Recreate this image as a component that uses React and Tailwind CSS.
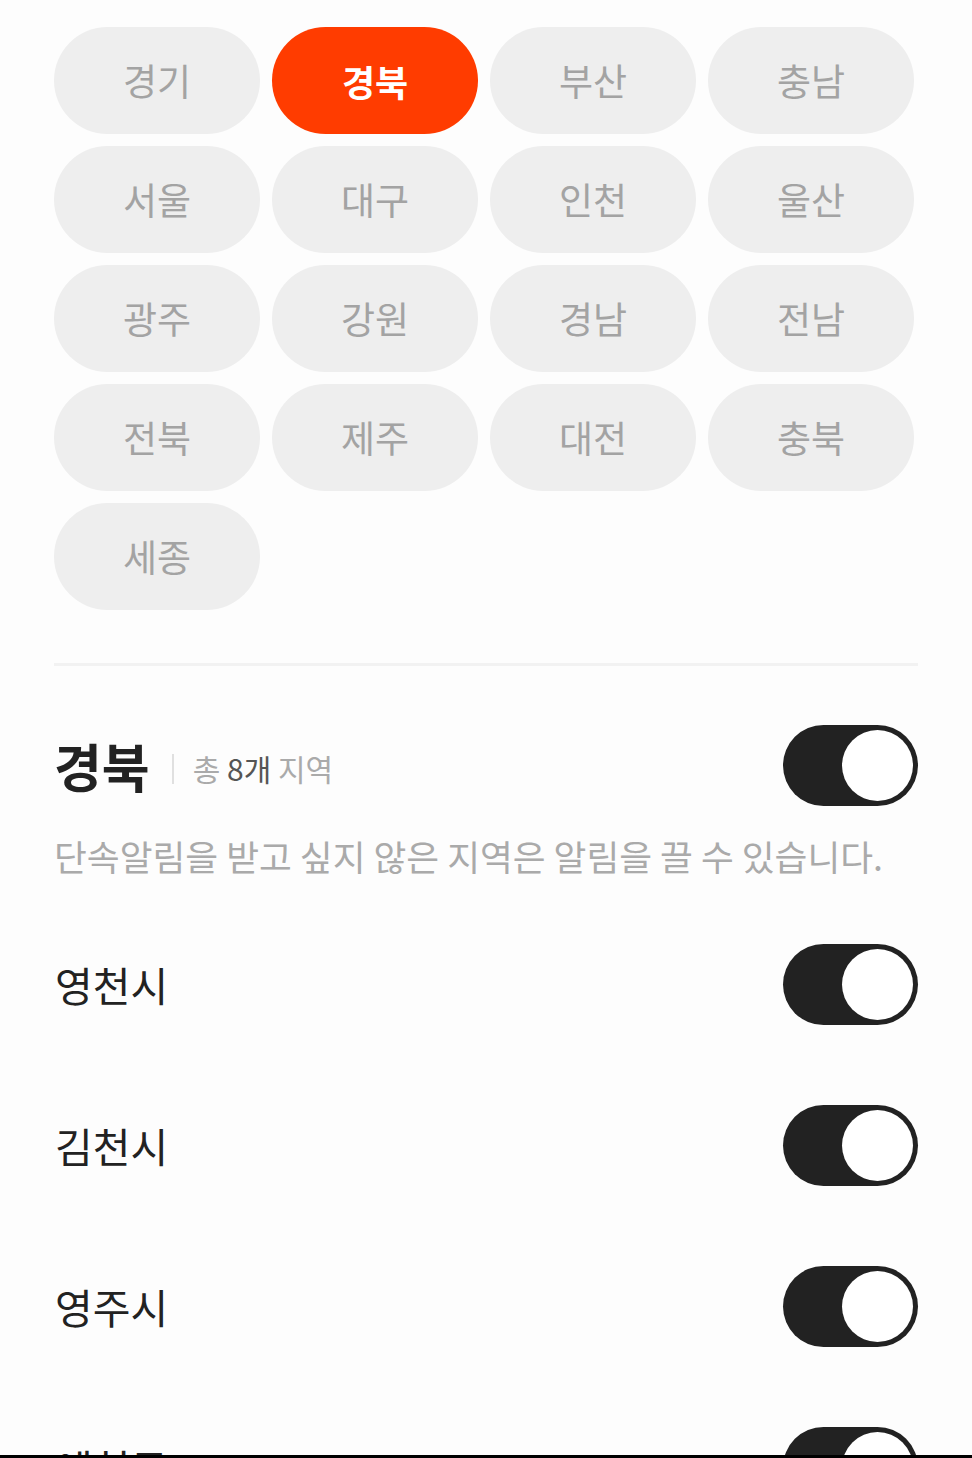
import React from "react";

const regions = [
  "경기", "경북", "부산", "충남",
  "서울", "대구", "인천", "울산",
  "광주", "강원", "경남", "전남",
  "전북", "제주", "대전", "충북",
  "세종",
];

const cities = ["영천시", "김천시", "영주시", "예천군"];

function Toggle() {
  return (
    <div className="w-[135px] h-[81px] rounded-full bg-[#222222] flex items-center justify-end pr-[5px] shrink-0">
      <div className="w-[71px] h-[71px] rounded-full bg-white" />
    </div>
  );
}

export default function App() {
  return (
    <div
      className="w-[972px] h-[1458px] overflow-hidden bg-[#fdfdfd] border-b-[3px] border-black"
      style={{ fontFamily: '"Noto Sans CJK KR", "Noto Sans", sans-serif' }}
    >
      <div className="px-[54px] pt-[27px]">
        <div className="grid grid-cols-4 gap-[12px] w-[860px]">
          {regions.map((r) => {
            const active = r === "경북";
            return (
              <div
                key={r}
                className={
                  active
                    ? "h-[107px] rounded-full bg-[#ff3c00] flex items-center justify-center text-white font-bold text-[36px]"
                    : "h-[107px] rounded-full bg-[#eeeeee] flex items-center justify-center text-[#a3a3a3] text-[37px]"
                }
              >
                {r}
              </div>
            );
          })}
        </div>

        <div className="mt-[53px] h-[3px] bg-[#f2f2f2]" />

        <div className="mt-[59px] flex items-center justify-between">
          <div className="flex items-center">
            <span className="text-[52px] font-bold text-[#222222] leading-none">경북</span>
            <span className="ml-[22px] w-[2px] h-[30px] bg-[#e0e0e0] mt-[6px]" />
            <span className="ml-[19px] text-[30px] text-[#aaaaaa] mt-[6px]">
              총 <span className="text-[#555555]">8개</span> 지역
            </span>
          </div>
          <Toggle />
        </div>

        <div className="mt-[32px] text-[35.7px] text-[#aaaaaa] leading-none">
          단속알림을 받고 싶지 않은 지역은 알림을 끌 수 있습니다.
        </div>

        <div className="mt-[70px] flex flex-col">
          {cities.map((c) => (
            <div key={c} className="h-[161px] flex items-start justify-between">
              <div className="h-[81px] flex items-center">
                <span className="text-[41px] text-[#222222] leading-none ml-[1px]">{c}</span>
              </div>
              <Toggle />
            </div>
          ))}
        </div>
      </div>
    </div>
  );
}
